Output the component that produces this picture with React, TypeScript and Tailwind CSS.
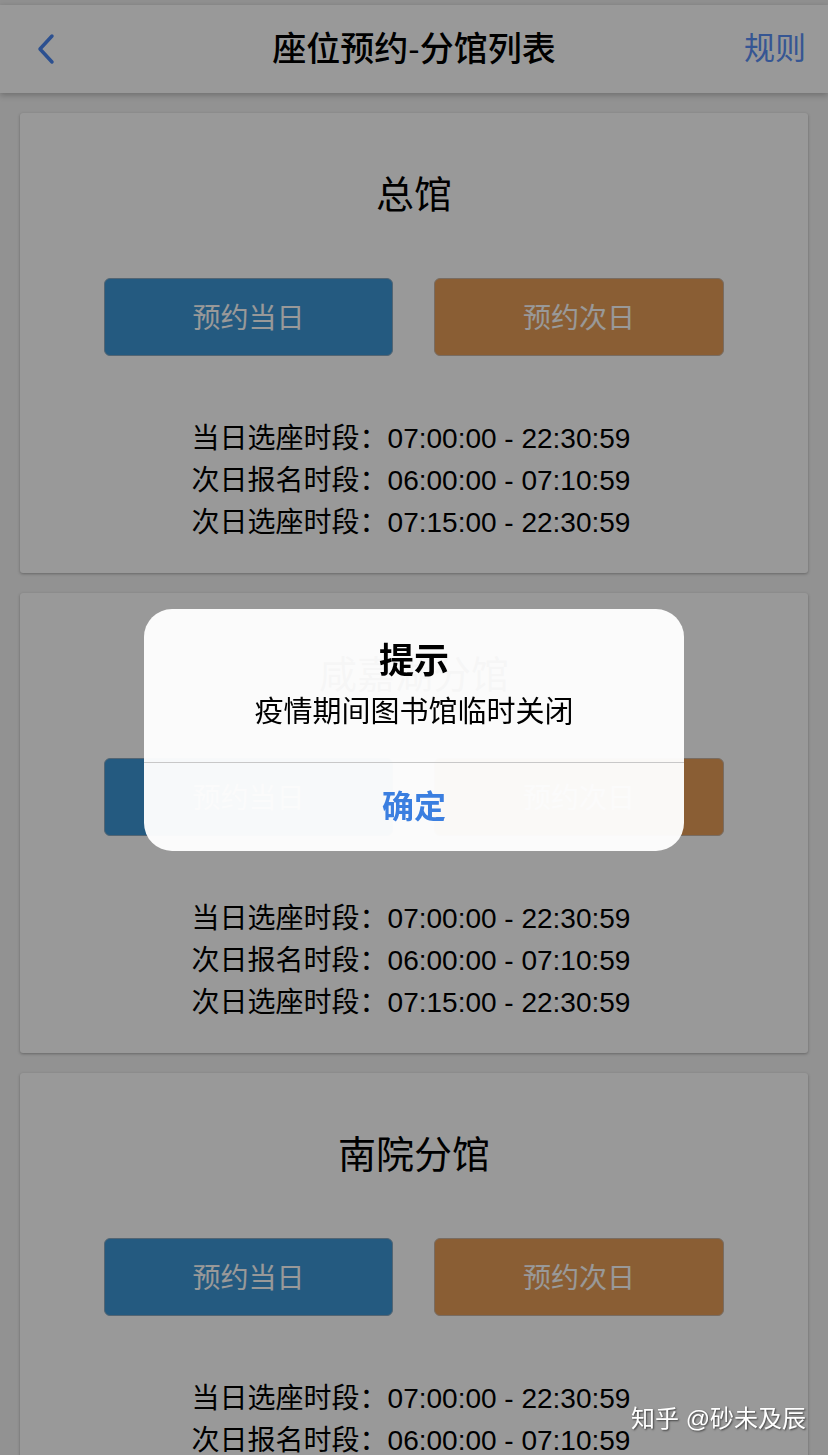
import React from 'react';

const BRANCHES = ['总馆', '咸嘉湖分馆', '南院分馆'];

const HOURS = [
  { label: '当日选座时段：', time: '07:00:00 - 22:30:59' },
  { label: '次日报名时段：', time: '06:00:00 - 07:10:59' },
  { label: '次日选座时段：', time: '07:15:00 - 22:30:59' },
];

const font = { fontFamily: '"Liberation Sans", "Noto Sans CJK SC", sans-serif' };

const BranchCard: React.FC<{ name: string }> = ({ name }) => (
  <div className="bg-white rounded-[3px] shadow-[0_1px_3px_rgba(0,0,0,0.3)] pt-[62px] pb-[29px] flex flex-col items-center">
    <h2 className="text-[38px] leading-[40px] text-black">{name}</h2>
    <div className="mt-[63px] flex gap-[41px]">
      <button className="w-[289px] h-[78px] rounded-[6px] border border-[#8aa9c0] bg-[#3c96d5] text-white text-[28px] pt-[3px]">
        预约当日
      </button>
      <button className="w-[290px] h-[78px] rounded-[6px] border border-[#c9b5a3] bg-[#e69d58] text-white text-[28px] pt-[3px]">
        预约次日
      </button>
    </div>
    <div className="mt-[62px] text-[28px] leading-[42px] text-black -ml-[6px]">
      {HOURS.map((h) => (
        <div key={h.label}>
          {h.label}
          {h.time}
        </div>
      ))}
    </div>
  </div>
);

const App: React.FC = () => {
  return (
    <div className="min-h-screen bg-[#f3f3f3] relative" style={font}>
      <div className="h-[5px] bg-[#f0f0f0]" />
      <header className="h-[88px] bg-white shadow-[0_2px_6px_rgba(0,0,0,0.25)] flex items-center px-[22px] relative z-10">
        <div className="flex-1 flex">
          <svg width="36" height="40" viewBox="0 0 36 40" className="ml-[8px]">
            <path d="M22 7 L10 20 L22 33" fill="none" stroke="#4a86f0" strokeWidth="3.5" strokeLinecap="round" strokeLinejoin="round" />
          </svg>
        </div>
        <h1 className="text-[34px] font-medium text-black">座位预约-分馆列表</h1>
        <div className="flex-1 flex justify-end">
          <span className="text-[31px] text-[#5b8ff5]">规则</span>
        </div>
      </header>

      <main className="px-[20px] pt-[20px] flex flex-col gap-[20px]">
        {BRANCHES.map((b) => (
          <BranchCard key={b} name={b} />
        ))}
      </main>

      {/* dim layer */}
      <div className="fixed inset-0 bg-black/40 z-20" />

      {/* alert */}
      <div className="fixed inset-0 z-30 flex items-start justify-center pt-[609px]">
        <div className="w-[540px] rounded-[28px] bg-[#fefefe]/[0.97] flex flex-col">
          <div className="h-[153px] flex flex-col items-center pt-[30px]">
            <div className="text-[35px] leading-[44px] font-bold text-black">提示</div>
            <div className="mt-[9px] text-[29px] leading-[40px] text-black">疫情期间图书馆临时关闭</div>
          </div>
          <div className="h-px bg-[#c8c8c8]" />
          <button className="h-[88px] text-[32px] font-bold text-[#3b7fe0]">确定</button>
        </div>
      </div>

      {/* watermark */}
      <div className="fixed right-[22px] bottom-[18px] z-40 text-white text-[24px] [text-shadow:1px_1px_2px_rgba(0,0,0,0.6)]">
        知乎 @砂未及辰
      </div>
    </div>
  );
};

export default App;
